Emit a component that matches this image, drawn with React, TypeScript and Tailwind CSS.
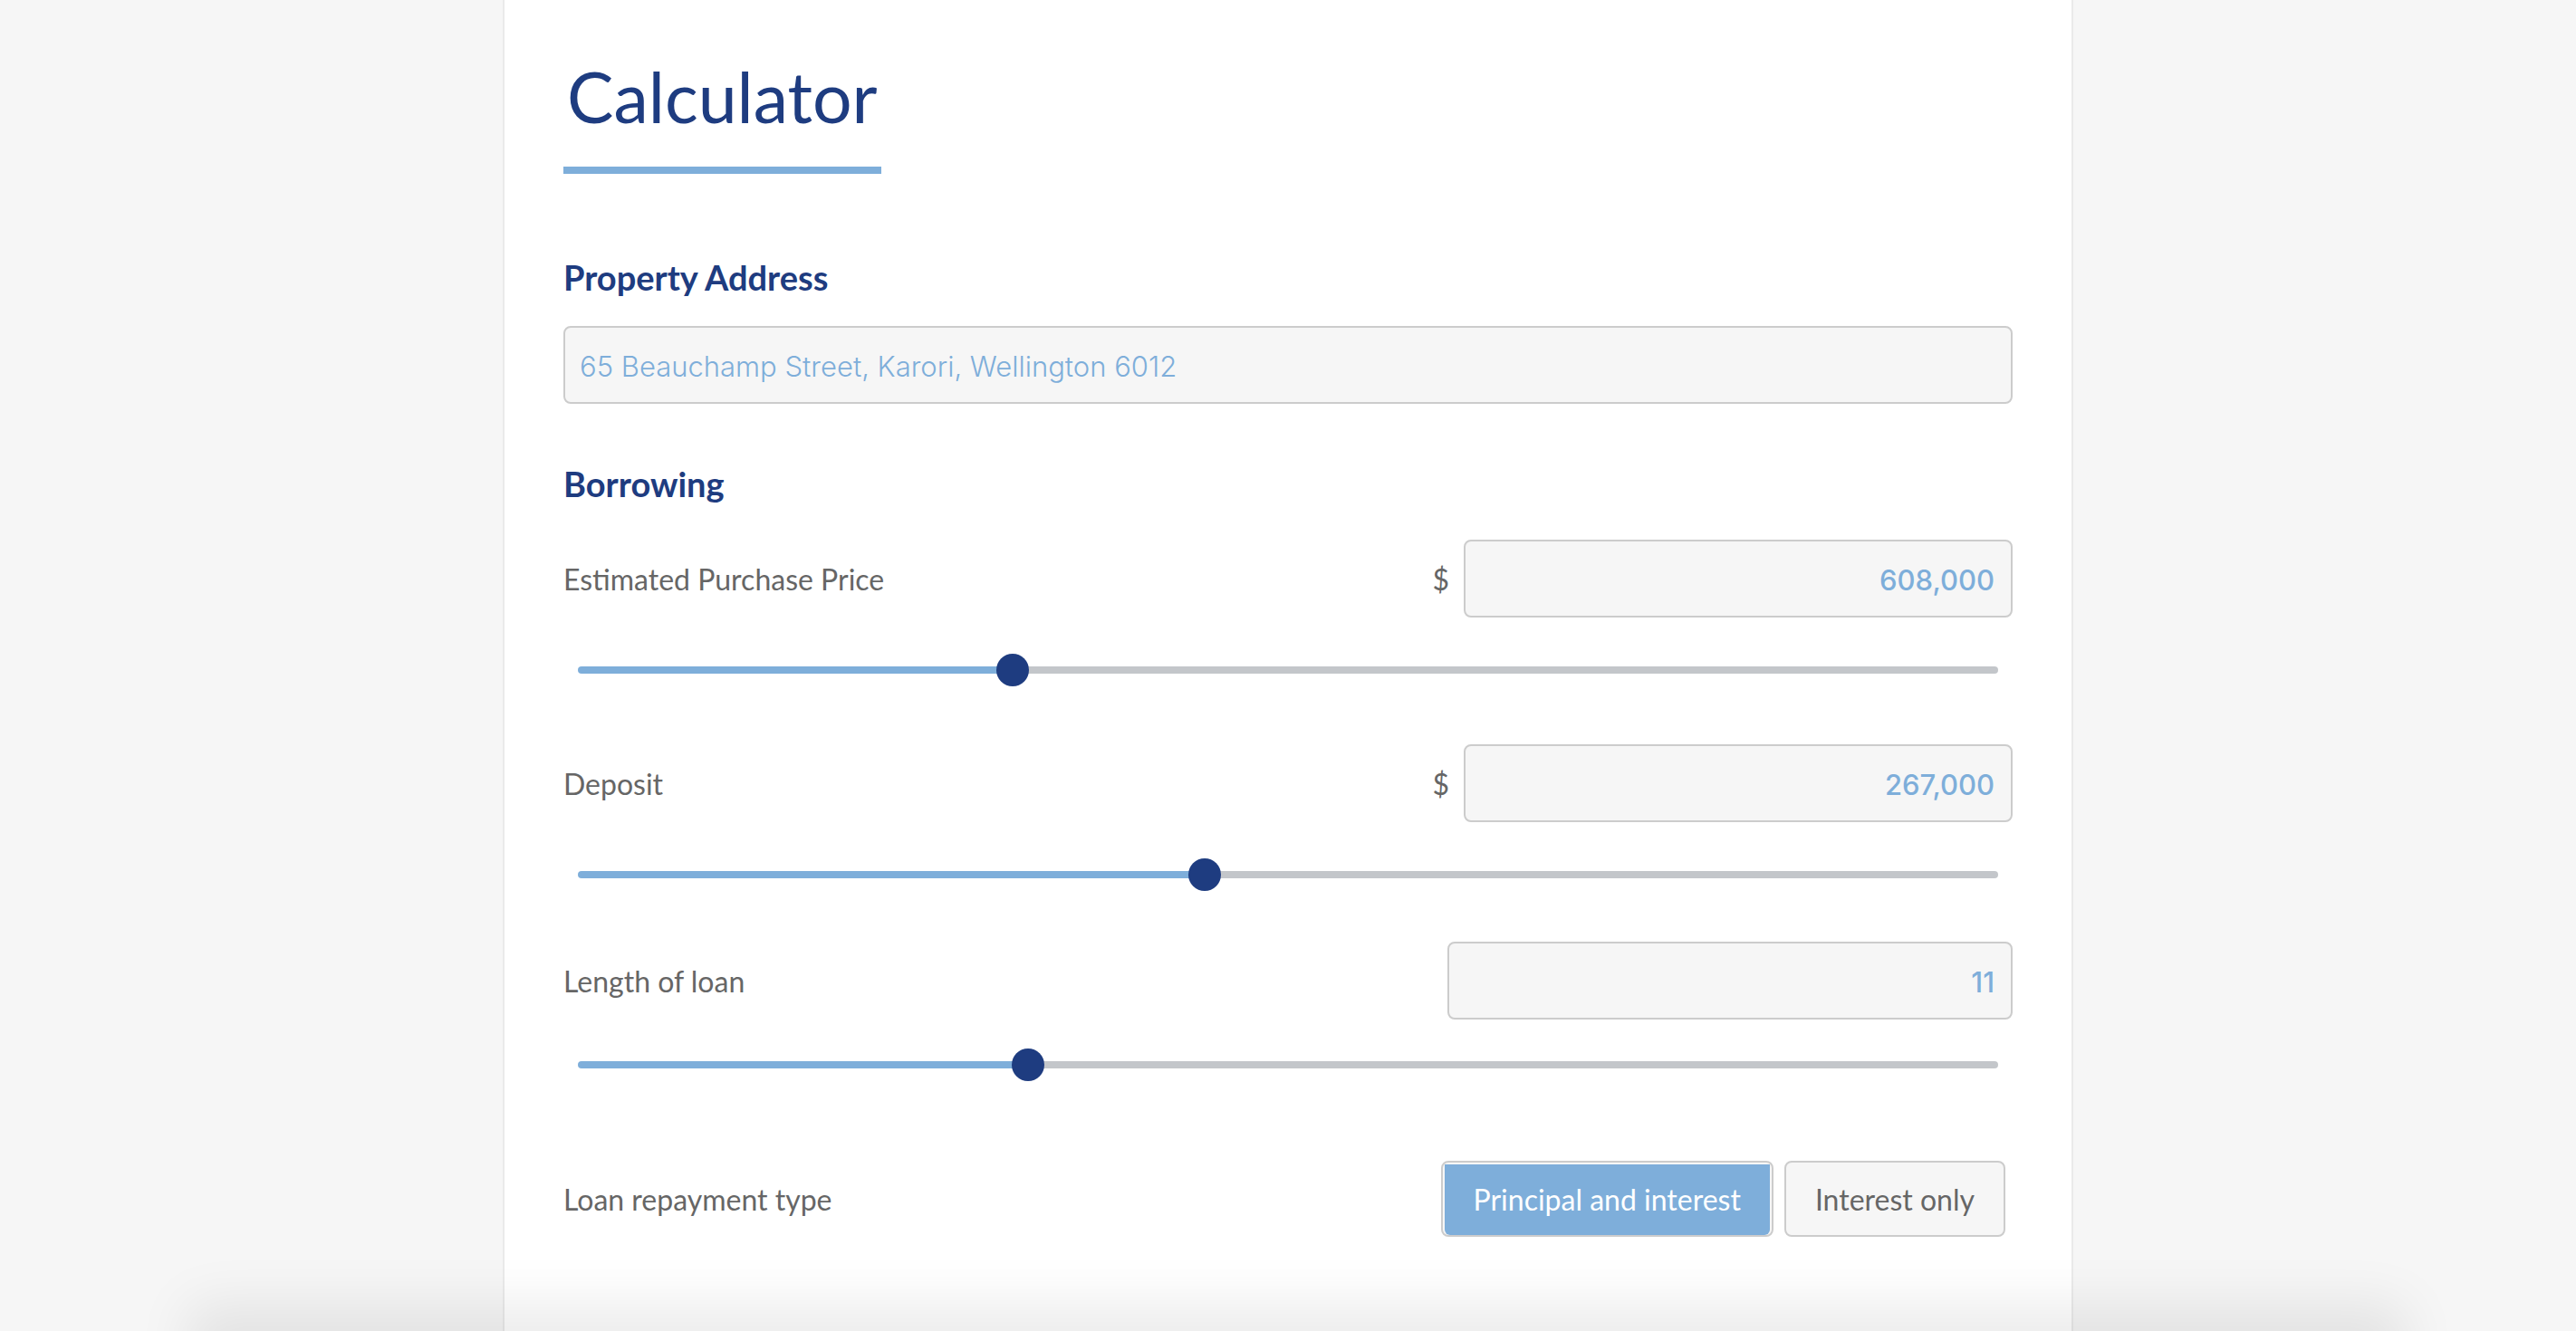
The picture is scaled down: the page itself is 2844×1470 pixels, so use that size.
import { useState } from "react";

const boxClass =
  "h-[86px] min-w-0 rounded-lg border-2 border-[#cccccc] bg-[#f6f6f6] pt-0.5 font-[Inter,sans-serif] text-[31px] leading-10 text-[#7eaeda] outline-none focus:border-[#7eaeda]";

type AmountProps = {
  id: string;
  label: string;
  currency?: boolean;
  value: number;
  min: number;
  max: number;
  step: number;
  onChange: (value: number) => void;
  sliderGap: string;
};

function AmountField({ id, label, currency, value, min, max, step, onChange, sliderGap }: AmountProps) {
  const ratio = (value - min) / (max - min);
  const stop = `calc(18px + (100% - 36px) * ${ratio})`;

  return (
    <div>
      <div className="flex items-center justify-between gap-4">
        <label htmlFor={id} className="min-w-0 pt-0.5">
          {label}
        </label>
        <div className="flex min-w-0 items-center gap-4">
          {currency && <span className="pt-0.5">$</span>}
          <input
            id={id}
            type="text"
            inputMode="numeric"
            value={value.toLocaleString("en-NZ")}
            onChange={(e) => {
              const next = Number(e.target.value.replace(/\D/g, ""));
              onChange(Math.min(max, Math.max(min, next)));
            }}
            className={`${boxClass} ${currency ? "w-[606px]" : "w-[624px]"} px-[18px] text-right font-medium`}
          />
        </div>
      </div>
      <div className={`px-4 ${sliderGap}`}>
        <input
          type="range"
          aria-label={label}
          min={min}
          max={max}
          step={step}
          value={value}
          onChange={(e) => onChange(Number(e.target.value))}
          style={{ backgroundImage: `linear-gradient(to right, #7eaeda ${stop}, #c3c6ca ${stop})` }}
          className="block h-2 w-full cursor-pointer appearance-none rounded-full outline-none [&::-webkit-slider-thumb]:size-9 [&::-webkit-slider-thumb]:appearance-none [&::-webkit-slider-thumb]:rounded-full [&::-webkit-slider-thumb]:bg-[#1e3c80] [&::-moz-range-thumb]:size-9 [&::-moz-range-thumb]:rounded-full [&::-moz-range-thumb]:border-0 [&::-moz-range-thumb]:bg-[#1e3c80]"
        />
      </div>
    </div>
  );
}

const repaymentTypes = ["Principal and interest", "Interest only"];

export default function App() {
  const [address, setAddress] = useState("65 Beauchamp Street, Karori, Wellington 6012");
  const [price, setPrice] = useState(608000);
  const [deposit, setDeposit] = useState(267000);
  const [years, setYears] = useState(11);
  const [repayment, setRepayment] = useState(repaymentTypes[0]);

  return (
    <div className="min-h-screen bg-[#f6f6f6] font-[Lato,sans-serif] text-[32px] leading-10 text-[#666666]">
      <main className="mx-auto min-h-screen max-w-[1734px] border-x-2 border-[#eaeaea] bg-white px-[65px] pt-15 pb-[104px]">
        <h1 className="inline-block border-b-8 border-[#7eaeda] px-1 pb-8 align-top text-[77px] leading-[92px] text-[#1e3c80]">
          Calculator
        </h1>

        <section className="mt-[90px]">
          <h2 className="text-[38px] leading-12 font-bold text-[#1e3c80]">
            <label htmlFor="address">Property Address</label>
          </h2>
          <input
            id="address"
            type="text"
            value={address}
            onChange={(e) => setAddress(e.target.value)}
            className={`${boxClass} mt-[30px] block w-full px-4 font-light`}
          />
        </section>

        <section className="mt-16">
          <h2 className="text-[38px] leading-12 font-bold text-[#1e3c80]">Borrowing</h2>
          <div className="mt-[38px]">
            <AmountField
              id="price"
              label="Estimated Purchase Price"
              currency
              value={price}
              min={0}
              max={2016000}
              step={1000}
              onChange={setPrice}
              sliderGap="pt-[54px]"
            />
          </div>
          <div className="mt-[78px]">
            <AmountField
              id="deposit"
              label="Deposit"
              currency
              value={deposit}
              min={0}
              max={607000}
              step={1000}
              onChange={setDeposit}
              sliderGap="pt-[54px]"
            />
          </div>
          <div className="mt-[70px]">
            <AmountField
              id="years"
              label="Length of loan"
              value={years}
              min={1}
              max={33}
              step={1}
              onChange={setYears}
              sliderGap="pt-[46px]"
            />
          </div>

          <div className="mt-[102px] flex items-center justify-between gap-4 pr-2">
            <span id="repayment-label" className="pt-0.5">
              Loan repayment type
            </span>
            <div role="group" aria-labelledby="repayment-label" className="flex gap-3">
              {repaymentTypes.map((type) => {
                const active = type === repayment;
                return (
                  <button
                    key={type}
                    type="button"
                    aria-pressed={active}
                    onClick={() => setRepayment(type)}
                    className={`flex h-[84px] cursor-pointer rounded-lg border-2 border-[#cccccc] bg-[#f6f6f6] whitespace-nowrap ${active ? "px-0.5 pt-0.5" : ""}`}
                  >
                    <span
                      className={
                        active
                          ? "flex h-full items-center rounded-b-md bg-[#7eaeda] px-8 text-white"
                          : "flex h-full items-center px-8 pt-0.5"
                      }
                    >
                      {type}
                    </span>
                  </button>
                );
              })}
            </div>
          </div>
        </section>
      </main>

      {/* Soft shadow cast upwards by the panel below the fold */}
      <div className="pointer-events-none fixed top-full right-[188px] left-[208px] h-[100px] shadow-[0_-30px_60px_rgba(0,0,0,0.08)]" />
    </div>
  );
}
